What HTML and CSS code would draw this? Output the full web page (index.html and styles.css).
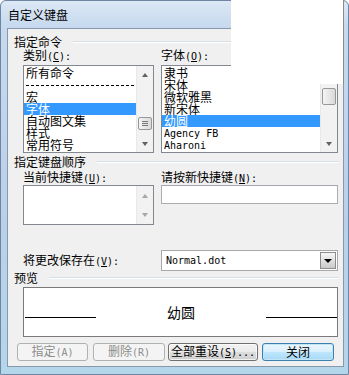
FILE: index.html
```html
<!DOCTYPE html>
<html lang="zh-CN">
<head>
    <meta charset="UTF-8" />
    <title>自定义键盘</title>
    <link rel="stylesheet" href="styles.css">
</head>
<body>

<div class="window">
    <div class="titlebar">自定义键盘</div>

    <div class="client">

        <div class="group"><span>指定命令</span><i class="group-line"></i></div>

        <div class="cols">
            <div class="field">
                <div class="label">类别<span class="en">(<u>C</u>):</span></div>
                <div class="listbox tall">
                    <ul class="items">
                        <li>所有命令</li>
                        <li class="dashes"><b></b></li>
                        <li>宏</li>
                        <li class="selected">字体</li>
                        <li>自动图文集</li>
                        <li>样式</li>
                        <li>常用符号</li>
                    </ul>
                    <div class="vscroll">
                        <div class="arrow up"></div>
                        <div class="track"><div class="thumb grip" style="margin-top:34px;height:13px"></div></div>
                        <div class="arrow down"></div>
                    </div>
                </div>
            </div>
            <div class="field">
                <div class="label">字体<span class="en">(<u>O</u>):</span></div>
                <div class="listbox tall">
                    <ul class="items">
                        <li>隶书</li>
                        <li>宋体</li>
                        <li>微软雅黑</li>
                        <li>新宋体</li>
                        <li class="selected">幼圆</li>
                        <li class="en">Agency FB</li>
                        <li class="en">Aharoni</li>
                    </ul>
                    <div class="vscroll">
                        <div class="arrow up"></div>
                        <div class="track"><div class="thumb" style="margin-top:5px;height:17px"></div></div>
                        <div class="arrow down"></div>
                    </div>
                </div>
            </div>
        </div>

        <div class="group gap-top"><span>指定键盘顺序</span><i class="group-line"></i></div>

        <div class="cols keys">
            <div class="field">
                <div class="label">当前快捷键<span class="en">(<u>U</u>):</span></div>
                <div class="listbox short">
                    <ul class="items"></ul>
                    <div class="vscroll">
                        <div class="arrow up off"></div>
                        <div class="arrow down off"></div>
                    </div>
                </div>
            </div>
            <div class="field">
                <div class="label">请按新快捷键<span class="en">(<u>N</u>):</span></div>
                <div class="textbox"></div>
            </div>
        </div>

        <div class="cols save">
            <div class="label">将更改保存在<span class="en">(<u>V</u>):</span></div>
            <div class="combo">
                <span class="en">Normal.dot</span>
                <div class="combo-btn"></div>
            </div>
        </div>

        <div class="group"><span>预览</span><i class="group-line"></i></div>

        <div class="preview">
            <i class="rule"></i>
            <span class="sample">幼圆</span>
            <i class="rule"></i>
        </div>

        <div class="buttons">
            <button class="btn b1" disabled>指定<span class="en">(A)</span></button>
            <button class="btn b2" disabled>删除<span class="en">(R)</span></button>
            <button class="btn b3">全部重设<span class="en">(<u>S</u>)...</span></button>
            <button class="btn b4 default">关闭</button>
        </div>
    </div>

    <div class="cover"></div>
</div>

</body>
</html>
```

FILE: styles.css
```css
* {
    box-sizing: border-box;
}
body {
    margin: 0;
    width: 349px;
    height: 375px;
    overflow: hidden;
    background: #ffffff;
    font-family: "Noto Sans CJK SC", sans-serif;
    font-size: 12px;
    color: #000;
}
ul {
    margin: 0;
    padding: 0;
    list-style: none;
}
.en {
    font-family: "DejaVu Sans Mono", "Liberation Mono", monospace;
    font-size: 10px;
}
u {
    text-decoration-thickness: 1px;
    text-underline-offset: 1px;
}

.window {
    position: relative;
    width: 349px;
    height: 375px;
    display: flex;
    flex-direction: column;
    border: 1px solid #6e86a3;
    border-radius: 6px 6px 0 0;
    background: linear-gradient(180deg, #dce8f5 0%, #c6d9ee 26px, #bad0e9 60%, #b4d6ea 100%);
}
.titlebar {
    height: 27px;
    line-height: 27px;
    padding-left: 7px;
    font-size: 12px;
    white-space: nowrap;
}
.client {
    flex: 1;
    margin: 0 4px 7px 6px;
    padding: 7px 5px 0 15px;
    background: #f0f0f0;
    border: 1px solid #8898ab;
}

/* group headings with a rule */
.group {
    display: flex;
    align-items: center;
    height: 12px;
    line-height: 12px;
    margin-left: -9px;
    white-space: nowrap;
}
.group.gap-top {
    margin-top: 3px;
}
.group-line {
    flex: 1;
    margin-left: 11px;
    border-top: 1px solid #d5dfe5;
    border-bottom: 1px solid #ffffff;
}

.cols {
    display: grid;
    grid-template-columns: 131px 177px;
    column-gap: 7px;
}
.label {
    height: 12px;
    line-height: 12px;
    white-space: nowrap;
}
.cols .field .label {
    margin-top: 1px;
    margin-bottom: 4px;
}
.cols.keys .field .label {
    margin-top: 3px;
    margin-bottom: 2px;
}

/* list boxes */
.listbox {
    display: flex;
    background: #fff;
    border: 1px solid #828790;
}
.listbox.tall {
    height: 88px;
}
.listbox.short {
    height: 40px;
}
.items {
    flex: 1;
    padding-top: 1px;
    overflow: hidden;
}
.items li {
    height: 12px;
    line-height: 12px;
    padding-left: 2px;
    white-space: nowrap;
}
.items li.en {
    line-height: 13px;
}
.items li.selected {
    background: #3399ff;
    color: #fff;
}
.items li.dashes {
    padding: 6px 1px 0 2px;
}
.dashes b {
    display: block;
    height: 1px;
    background: repeating-linear-gradient(90deg, #000 0 3px, transparent 3px 5px);
}

.vscroll {
    width: 17px;
    display: flex;
    flex-direction: column;
    background: #f2f2f2;
    border-left: 1px solid #e8e8e8;
}
.arrow {
    height: 17px;
    display: flex;
    align-items: center;
    justify-content: center;
}
.short .arrow {
    flex: 1;
}
.arrow::after {
    content: "";
    width: 0;
    height: 0;
    border-left: 3.5px solid transparent;
    border-right: 3.5px solid transparent;
}
.arrow.up::after {
    border-bottom: 4px solid #606060;
}
.arrow.down::after {
    border-top: 4px solid #606060;
}
.arrow.off.up::after {
    border-bottom-color: #a6a6a6;
}
.arrow.off.down::after {
    border-top-color: #a6a6a6;
}
.track {
    flex: 1;
    padding: 0 1px 0 1px;
}
.thumb {
    border: 1px solid #979797;
    border-radius: 2px;
    background: linear-gradient(90deg, #f4f4f4, #e4e4e4 60%, #d9d9d9);
}
.thumb.grip {
    background:
        linear-gradient(#777 0 0) center 3px / 6px 1px no-repeat,
        linear-gradient(#777 0 0) center 5px / 6px 1px no-repeat,
        linear-gradient(#777 0 0) center 7px / 6px 1px no-repeat,
        linear-gradient(90deg, #f4f4f4, #e4e4e4 60%, #d9d9d9);
}

.textbox {
    height: 19px;
    background: #fff;
    border: 1px solid #abadb3;
    border-top-color: #a3a6ad;
}

/* save row */
.cols.save {
    margin-top: 25px;
    align-items: center;
}
.cols.save .label {
    margin-top: -2px;
}
.combo {
    height: 21px;
    display: flex;
    align-items: center;
    padding-left: 4px;
    background: #fff;
    border: 1px solid #a8a8a8;
}
.combo .en {
    flex: 1;
    line-height: 19px;
}
.combo-btn {
    width: 16px;
    height: 17px;
    margin-right: 1px;
    display: flex;
    align-items: center;
    justify-content: center;
    border: 1px solid #8c8c8c;
    background: linear-gradient(180deg, #f7f7f7, #dedede 55%, #c9c9c9);
}
.combo-btn::after {
    content: "";
    border-left: 4px solid transparent;
    border-right: 4px solid transparent;
    border-top: 4px solid #000;
}

.cols.save + .group {
    margin-top: 1px;
}

/* preview */
.preview {
    height: 50px;
    margin-top: 3px;
    display: flex;
    justify-content: space-between;
    align-items: flex-end;
    padding: 0 0 18px 1px;
    background: #fff;
    border: 1px solid #7a7a7a;
}
.rule {
    width: 71px;
    height: 1px;
    background: #000;
}
.sample {
    font-size: 14px;
    line-height: 14px;
    margin-bottom: -1px;
}

/* buttons */
.buttons {
    display: flex;
    margin: 6px 0 0 -6px;
}
.btn {
    height: 18px;
    padding: 0;
    font-family: "Noto Sans CJK SC", sans-serif;
    font-size: 12px;
    line-height: 14px;
    color: #000;
    border: 1px solid #707070;
    border-radius: 3px;
    background: linear-gradient(180deg, #f2f2f2 0%, #ebebeb 48%, #dddddd 52%, #cfcfcf 100%);
    box-shadow: inset 0 0 0 1px rgba(255,255,255,0.7);
    white-space: nowrap;
}
.btn:disabled {
    color: #8d8d8d;
    border-color: #adb2b5;
    background: #f4f4f4;
    box-shadow: none;
}
.btn.default {
    border-color: #3c7fb1;
    background: linear-gradient(180deg, #eaf6fd 0%, #d9f0fc 48%, #bee6fd 52%, #a7d9f5 100%);
    box-shadow: inset 0 0 0 1px #c4e5f6;
}
.b1 { width: 71px; }
.b2 { width: 72px; margin-left: 5px; }
.b3 { width: 90px; margin-left: 3px; }
.b4 { width: 72px; margin-left: 4px; }

.cover {
    position: absolute;
    top: -1px;
    left: 230px;
    width: 113px;
    height: 84px;
    background: #fff;
    border-right: 1px solid #8a8a8a;
}
```
